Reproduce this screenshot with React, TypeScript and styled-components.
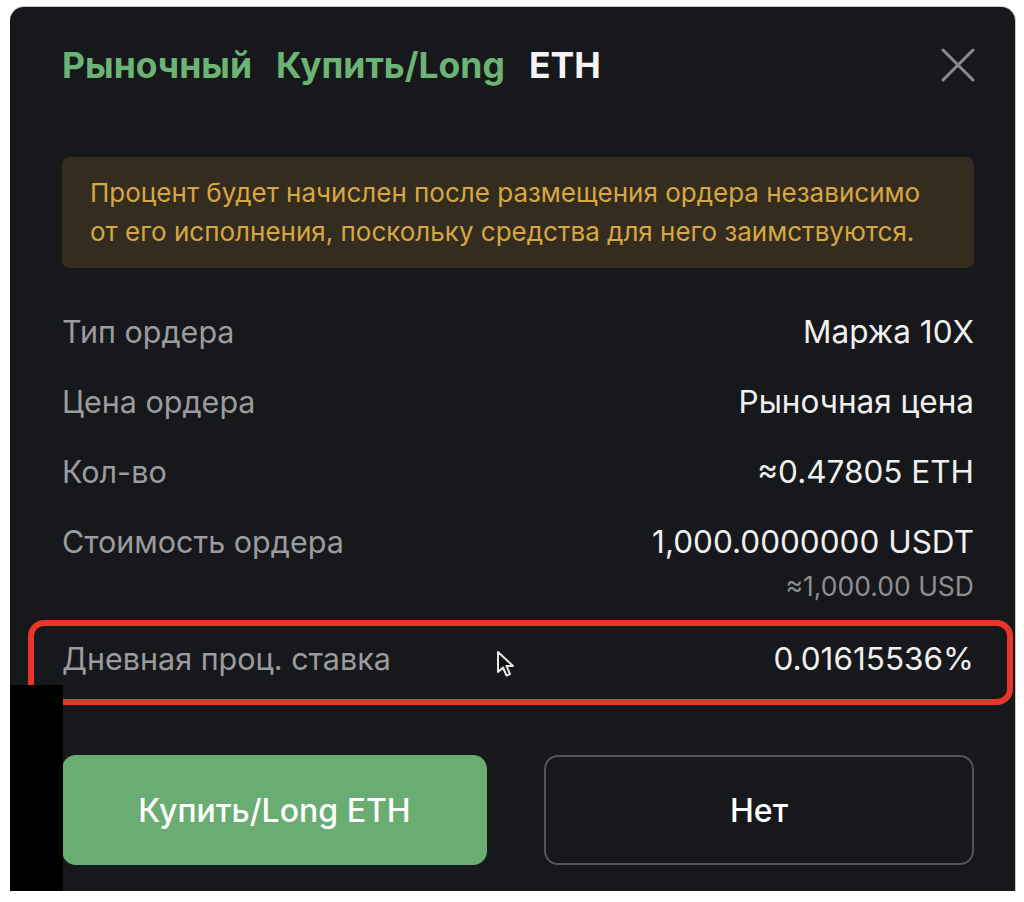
import styled, { createGlobalStyle } from "styled-components";

const GlobalStyle = createGlobalStyle`
  html, body {
    margin: 0;
    padding: 0;
    background: #ffffff;
  }
  body {
    font-family: Inter, "Noto Sans", sans-serif;
  }
`;

type InfoRow = {
  label: string;
  value: string;
  sub?: string;
};

const rows: InfoRow[] = [
  { label: "Тип ордера", value: "Маржа 10X" },
  { label: "Цена ордера", value: "Рыночная цена" },
  { label: "Кол-во", value: "≈0.47805 ETH" },
  {
    label: "Стоимость ордера",
    value: "1,000.0000000 USDT",
    sub: "≈1,000.00 USD",
  },
];

const App: React.FC = () => {
  return (
    <>
      <GlobalStyle />
      <Page>
        <Panel>
          <Header>
            <Title>
              <TitleWord $accent>Рыночный</TitleWord>
              <TitleWord $accent>Купить/Long</TitleWord>
              <TitleWord>ETH</TitleWord>
            </Title>
            <CloseButton aria-label="Закрыть">
              <svg width="34" height="34" viewBox="0 0 34 34" fill="none">
                <path
                  d="M2 2L32 32M32 2L2 32"
                  stroke="#8b8b8d"
                  strokeWidth="3"
                  strokeLinecap="round"
                />
              </svg>
            </CloseButton>
          </Header>

          <Notice>
            Процент будет начислен после размещения ордера независимо от его
            исполнения, поскольку средства для него заимствуются.
          </Notice>

          <List>
            {rows.map((row) => (
              <Row key={row.label}>
                <Label>{row.label}</Label>
                <ValueBox>
                  <Value>{row.value}</Value>
                  {row.sub && <SubValue>{row.sub}</SubValue>}
                </ValueBox>
              </Row>
            ))}
            <HighlightRow>
              <Label>Дневная проц. ставка</Label>
              <Value>0.01615536%</Value>
              <Cursor width="22" height="28" viewBox="0 0 22 28">
                <path
                  d="M2 2L2 22L7 17.5L10.5 25.5L14 24L10.5 16L17 16Z"
                  fill="#111"
                  stroke="#e6e6e6"
                  strokeWidth="2"
                  strokeLinejoin="round"
                />
              </Cursor>
            </HighlightRow>
          </List>

          <Actions>
            <PrimaryButton>Купить/Long ETH</PrimaryButton>
            <SecondaryButton>Нет</SecondaryButton>
          </Actions>

          <CropStrip />
        </Panel>
      </Page>
    </>
  );
};

const Page = styled.div`
  width: 1024px;
  height: 902px;
  padding: 7px 0 0 10px;
  box-sizing: border-box;
  background: #ffffff;
  overflow: hidden;
`;

const Panel = styled.div`
  position: relative;
  width: 1005px;
  height: 884px;
  box-sizing: border-box;
  padding: 0 41px 0 52px;
  background: #17181b;
  border-radius: 14px 14px 0 0;
  box-shadow: 0 -1px 0 #c8c8c8, 1px 0 0 #c8c8c8;
`;

const Header = styled.div`
  display: flex;
  align-items: center;
  justify-content: space-between;
  height: 116px;
`;

const Title = styled.h1`
  display: flex;
  gap: 24px;
  margin: 0;
  font-size: 35.5px;
  font-weight: 700;
  letter-spacing: 0;
`;

const TitleWord = styled.span<{ $accent?: boolean }>`
  color: ${(p) => (p.$accent ? "#6cb474" : "#f4f4f4")};
`;

const CloseButton = styled.button`
  display: flex;
  padding: 0;
  margin-right: -1px;
  background: none;
  border: 0;
  cursor: pointer;
`;

const Notice = styled.div`
  margin-top: 34px;
  padding: 16px 28px;
  height: 111px;
  box-sizing: border-box;
  background: #342d1f;
  border-radius: 8px;
  color: #d7a743;
  font-size: 26px;
  line-height: 39px;
`;

const List = styled.div`
  margin-top: 29px;
  display: flex;
  flex-direction: column;
`;

const Row = styled.div`
  display: flex;
  justify-content: space-between;
  align-items: flex-start;
  padding: 15px 0;
  line-height: 40px;
`;

const Label = styled.span`
  color: #9c9c9f;
  font-size: 30.5px;
`;

const ValueBox = styled.div`
  display: flex;
  flex-direction: column;
  align-items: flex-end;
`;

const Value = styled.span`
  color: #f0f0f0;
  font-size: 31.5px;
`;

const SubValue = styled.span`
  margin-top: 9px;
  color: #8e8e91;
  font-size: 26.5px;
  line-height: 30px;
`;

const HighlightRow = styled.div`
  position: relative;
  display: flex;
  justify-content: space-between;
  align-items: center;
  height: 70px;
  margin-top: 7px;

  &::after {
    content: "";
    position: absolute;
    top: -3px;
    bottom: -12px;
    left: -34px;
    right: -39px;
    border: 6px solid #e8372a;
    border-radius: 16px;
    pointer-events: none;
  }
`;

const Cursor = styled.svg`
  position: absolute;
  left: 434px;
  top: 27px;
`;

const Actions = styled.div`
  display: grid;
  grid-template-columns: 425px 1fr;
  gap: 57px;
  margin-top: 62px;
`;

const BaseButton = styled.button`
  height: 110px;
  border-radius: 14px;
  font-family: Inter, "Noto Sans", sans-serif;
  font-size: 32px;
  font-weight: 500;
  color: #ffffff;
  cursor: pointer;
`;

const PrimaryButton = styled(BaseButton)`
  background: #69ad72;
  border: 0;
`;

const SecondaryButton = styled(BaseButton)`
  background: transparent;
  border: 2px solid #555558;
`;

const CropStrip = styled.div`
  position: absolute;
  left: 0;
  bottom: 0;
  width: 53px;
  height: 206px;
  background: #000000;
`;

export default App;
